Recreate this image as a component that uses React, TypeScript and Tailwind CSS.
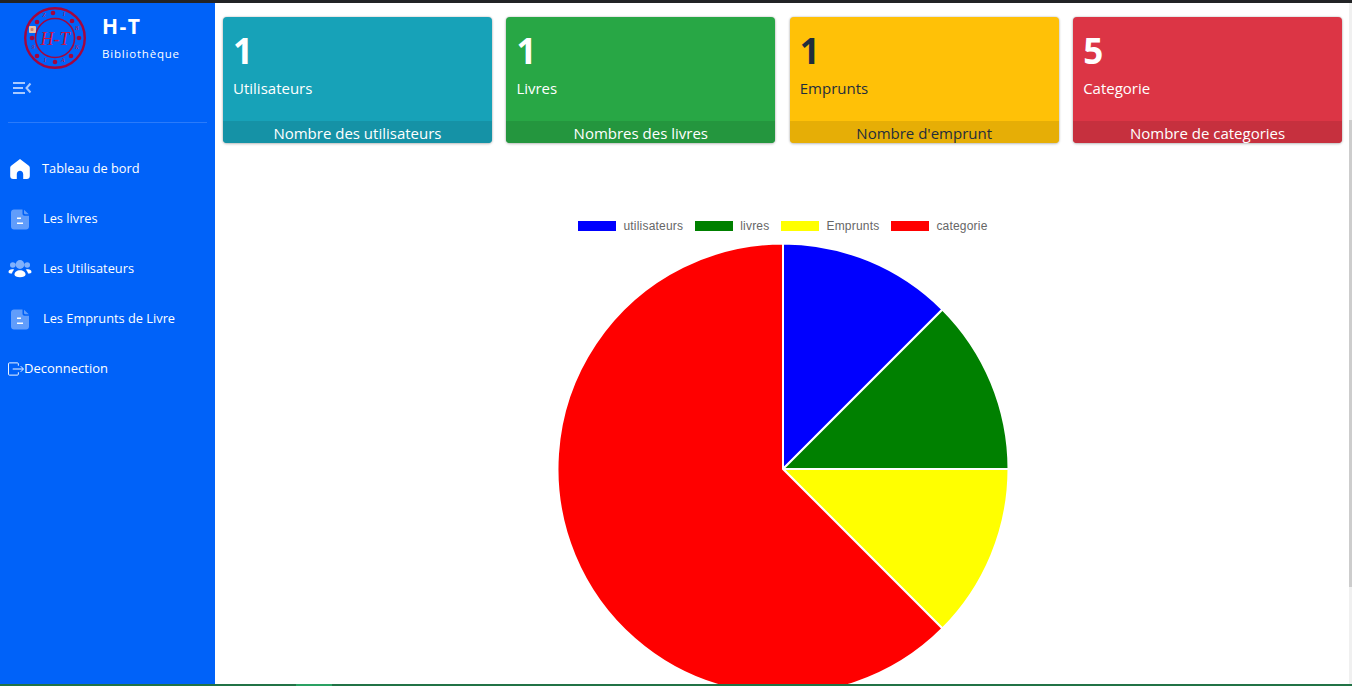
import React from 'react';

const font = { fontFamily: '"Open Sans", "Noto Sans", sans-serif' };

const cards = [
  { value: 1, label: 'Utilisateurs', footer: 'Nombre des utilisateurs', bg: 'bg-[#17a2b8]', foot: 'bg-[#1592a6]', text: 'text-white', num: 'text-white' },
  { value: 1, label: 'Livres', footer: 'Nombres des livres', bg: 'bg-[#28a745]', foot: 'bg-[#24963e]', text: 'text-white', num: 'text-white' },
  { value: 1, label: 'Emprunts', footer: "Nombre d'emprunt", bg: 'bg-[#ffc107]', foot: 'bg-[#e6ae06]', text: 'text-[#1f2d3d]', num: 'text-[#1f2d3d]' },
  { value: 5, label: 'Categorie', footer: 'Nombre de categories', bg: 'bg-[#dc3545]', foot: 'bg-[#c6303e]', text: 'text-white', num: 'text-white' },
];

const legend = [
  { label: 'utilisateurs', color: 'bg-[#0000ff]' },
  { label: 'livres', color: 'bg-[#008000]' },
  { label: 'Emprunts', color: 'bg-[#ffff00]' },
  { label: 'categorie', color: 'bg-[#ff0000]' },
];

const HomeIcon = () => (
  <svg width="22" height="22" viewBox="0 0 22 22" fill="#fff">
    <path d="M11 1 19.500 7.500c.8.600 1.300 1.500 1.300 2.500v8c0 1.800-1.200 3-3 3h-3.600v-4.800c0-1.900-1.400-3.400-3.200-3.400s-3.200 1.500-3.200 3.400V21H4.200c-1.800 0-3-1.200-3-3v-8c0-1 .5-1.900 1.300-2.500z" />
  </svg>
);

const FileIcon = () => (
  <svg width="22" height="22" viewBox="0 0 22 22">
    <path d="M5 1.500h8.500v4.300c0 1.100.9 2 2 2H20v10.700c0 1.900-1.300 3-3 3H5c-1.700 0-3-1.100-3-3v-14c0-1.700 1.300-3 3-3z" fill="#fff" opacity="0.38" />
    <path d="M15 1.800 19.800 6.300h-3.600c-.7 0-1.200-.5-1.200-1.200z" fill="#fff" opacity="0.38" />
    <rect x="8" y="9.500" width="4" height="1.500" fill="#fff" />
    <rect x="8" y="14.500" width="6" height="1.500" fill="#fff" />
  </svg>
);

const UsersIcon = () => (
  <svg width="24" height="20" viewBox="0 0 24 20" fill="#fff">
    <circle cx="12" cy="5.500" r="4.400" opacity="0.5" />
    <circle cx="4.800" cy="6" r="2.800" opacity="0.5" />
    <circle cx="19.200" cy="6" r="2.800" opacity="0.5" />
    <path d="M6.500 15.500c0-2.600 2.400-4.200 5.500-4.200s5.500 1.600 5.500 4.200c0 1.800-2.400 2.700-5.500 2.700s-5.500-.9-5.500-2.700z" />
    <path d="M.5 13c0-1.600 1.600-2.700 3.700-2.700.8 0 1.400.1 2 .4-1.200 1-2 2.300-2.200 3.800-1.900 0-3.500-.3-3.500-1.500zM23.500 13c0-1.600-1.600-2.700-3.700-2.700-.8 0-1.400.1-2 .4 1.200 1 2 2.300 2.200 3.800 1.900 0 3.500-.3 3.500-1.500z" />
  </svg>
);

const Logo = () => (
  <svg width="62" height="64" viewBox="0 0 62 64" fill="none">
    <circle cx="31" cy="32" r="29.800" stroke="#a3063f" strokeWidth="2.400" />
    <circle cx="31" cy="32" r="19.500" stroke="#a3063f" strokeWidth="1.600" />
    {[[29, 7], [48, 15], [55, 32], [47, 50], [31, 56], [13, 50], [8, 32], [13, 16]].map(([x, y]) => (
      <circle key={`${x}-${y}`} cx={x} cy={y} r="2.300" fill="#a3063f" />
    ))}
    {[['Z', 20, 11], ['I', 40, 10], ['B', 53, 24], ['K', 53, 43], ['A', 39, 56], ['I', 21, 56], ['9', 9, 43]].map(([ch, x, y]) => (
      <text key={`${ch}-${x}`} x={x} y={y} textAnchor="middle" fontSize="5.500" fontStyle="italic" fontFamily="Liberation Serif, serif" fill="#c9103f">{ch}</text>
    ))}
    <text x="31" y="39" textAnchor="middle" fontSize="18" fontStyle="italic" fontFamily="Liberation Serif, serif" fill="#d3123c">H-T</text>
    <rect x="5" y="20" width="7" height="7" rx="1" fill="#e8c4ac" />
    <rect x="6.500" y="22" width="3" height="3" rx="1" fill="#d08068" />
  </svg>
);

const MenuRow = ({ icon, label, left }: { icon: React.ReactNode; label: string; left: string }) => (
  <div className="flex h-[50px] items-center text-[12.800px] text-white">
    <div className="flex w-[42px] justify-center pr-[2px]">{icon}</div>
    <span className={left}>{label}</span>
  </div>
);

const PieChart = () => (
  <svg width="460" height="460" viewBox="0 0 460 460" className="shrink-0">
    <g stroke="#fff" strokeWidth="2" strokeLinejoin="round">
      <path d="M230 230V4.500A225.500 225.500 0 0 1 389.450 70.550Z" fill="#0000ff" />
      <path d="M230 230 389.450 70.550A225.500 225.500 0 0 1 455.500 230Z" fill="#008000" />
      <path d="M230 230H455.500A225.500 225.500 0 0 1 389.450 389.450Z" fill="#ffff00" />
      <path d="M230 230 389.450 389.450A225.500 225.500 0 1 1 230 4.500Z" fill="#ff0000" />
    </g>
  </svg>
);

export default function App() {
  return (
    <div className="relative flex h-[686px] flex-col overflow-hidden bg-white" style={font}>
      <div className="h-[3px] shrink-0 bg-[#222326]" />
      <div className="flex min-h-0 flex-1">
        <aside className="w-[215px] shrink-0 bg-[#0062f9]">
          <div className="flex h-[68px] items-start">
            <div className="ml-[24px] mt-[3px]">
              <Logo />
            </div>
            <div className="ml-[16px] text-white">
              <div className="mt-[9px] text-[21px] font-bold leading-[28px] tracking-[1.500px]">H-T</div>
              <div className="mt-[6px] text-[11.500px] leading-[16px] tracking-[0.800px]">Bibliothèque</div>
            </div>
          </div>
          <div className="ml-[13px] mt-[10px] h-[16px]">
            <svg width="19" height="14" viewBox="0 0 19 14" stroke="#a9c9ff" strokeWidth="2" fill="none">
              <path d="M0 2h12M0 7h10M0 12h12M17.500 2.500 13.500 7l4 4.500" />
            </svg>
          </div>
          <div className="mx-[8px] mt-[25px] h-px bg-[#2a7bfb]" />
          <div className="mt-[21px]">
            <MenuRow icon={<HomeIcon />} label="Tableau de bord" left="" />
            <MenuRow icon={<FileIcon />} label="Les livres" left="ml-[1px]" />
            <MenuRow icon={<UsersIcon />} label="Les Utilisateurs" left="ml-[1px]" />
            <MenuRow icon={<FileIcon />} label="Les Emprunts de Livre" left="ml-[1px]" />
          </div>
          <div className="flex h-[50px] items-center pl-[8px] text-[13px] text-white">
            <svg width="16" height="14" viewBox="0 0 17 14" fill="none" stroke="#fff" strokeWidth="1">
              <path d="M11 3.500V1.500c0-.6-.4-1-1-1H1.500c-.6 0-1 .4-1 1v11c0 .6.4 1 1 1H10c.6 0 1-.4 1-1v-2M5 7h11M13.500 4 16.500 7l-3 3" />
            </svg>
            <span>Deconnection</span>
          </div>
        </aside>
        <main className="min-w-0 flex-1 overflow-hidden pl-[8px] pr-[10px] pt-[14px]">
          <div className="grid grid-cols-4 gap-[14.500px]">
            {cards.map(card => (
              <div key={card.label} className={`h-[126px] overflow-hidden rounded-[4px] shadow-[0_0_2px_rgba(0,0,0,0.25),0_1px_3px_rgba(0,0,0,0.2)] ${card.bg}`}>
                <div className="h-[104px] pl-[10px] pt-[10px]">
                  <div className={`text-[35px] font-bold leading-[48px] ${card.num}`}>{card.value}</div>
                  <div className={`mt-[1px] text-[15px] leading-[24px] ${card.text}`}>{card.label}</div>
                </div>
                <div className={`h-[22px] text-center text-[15px] leading-[25px] ${card.foot} ${card.text}`}>{card.footer}</div>
              </div>
            ))}
          </div>
          <div className="flex flex-col items-center pl-[1px]">
            <div className="mt-[73px] flex h-[20px] items-center font-['Liberation_Sans',sans-serif] text-[12px] tracking-[0.200px] text-[#666]">
              {legend.map(item => (
                <div key={item.label} className="mx-[6px] flex items-center">
                  <span className={`mr-[7px] h-[10px] w-[38px] ${item.color}`} />
                  <span>{item.label}</span>
                </div>
              ))}
            </div>
            <div className="mt-[3px]">
              <PieChart />
            </div>
          </div>
        </main>
      </div>
      <div className="flex h-[2px] shrink-0 bg-[#217346]">
        <div className="ml-[296px] w-[36px] bg-[#2aa163]" />
      </div>
      {/* window scrollbar sits over the page edge */}
      <div className="absolute bottom-[2px] right-0 top-[3px] w-[3px] bg-[#f0f0f0]">
        <div className="mt-[117px] h-[467px] bg-[#cdcdcd]" />
      </div>
    </div>
  );
}
